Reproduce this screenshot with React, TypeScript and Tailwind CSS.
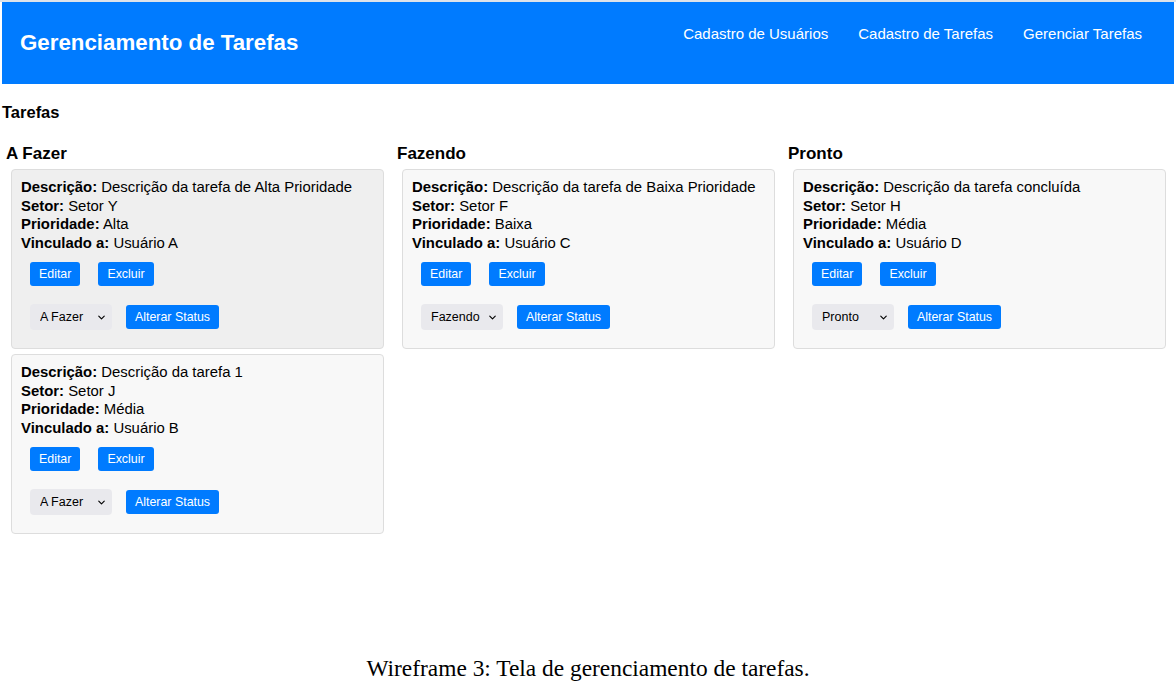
import { ChevronDown } from 'lucide-react'

interface Tarefa {
  id: number
  descricao: string
  setor: string
  prioridade: string
  usuario: string
  status: string
}

const colunas: { titulo: string; tarefas: Tarefa[] }[] = [
  {
    titulo: 'A Fazer',
    tarefas: [
      { id: 1, descricao: 'Descrição da tarefa de Alta Prioridade', setor: 'Setor Y', prioridade: 'Alta', usuario: 'Usuário A', status: 'A Fazer' },
      { id: 2, descricao: 'Descrição da tarefa 1', setor: 'Setor J', prioridade: 'Média', usuario: 'Usuário B', status: 'A Fazer' },
    ],
  },
  {
    titulo: 'Fazendo',
    tarefas: [
      { id: 3, descricao: 'Descrição da tarefa de Baixa Prioridade', setor: 'Setor F', prioridade: 'Baixa', usuario: 'Usuário C', status: 'Fazendo' },
    ],
  },
  {
    titulo: 'Pronto',
    tarefas: [
      { id: 4, descricao: 'Descrição da tarefa concluída', setor: 'Setor H', prioridade: 'Média', usuario: 'Usuário D', status: 'Pronto' },
    ],
  },
]

function Botao({ children }: { children: React.ReactNode }) {
  return (
    <button className="h-[24px] px-[9px] rounded-[3px] bg-[#007bff] text-white text-[12.4px] leading-none">
      {children}
    </button>
  )
}

function CardTarefa({ tarefa, destaque }: { tarefa: Tarefa; destaque?: boolean }) {
  return (
    <div
      className={`ml-[5px] w-[373px] border border-[#dddddd] rounded-[4px] pt-[8px] pb-[18px] pl-[9px] pr-[9px] ${
        destaque ? 'bg-[#efefef]' : 'bg-[#f8f8f8]'
      }`}
    >
      <div className="text-[14.9px] leading-[18.5px] text-black">
        <p><b>Descrição:</b> {tarefa.descricao}</p>
        <p><b>Setor:</b> {tarefa.setor}</p>
        <p><b>Prioridade:</b> {tarefa.prioridade}</p>
        <p><b>Vinculado a:</b> {tarefa.usuario}</p>
      </div>

      {/* Ações */}
      <div className="flex gap-[18px] ml-[9px] mt-[10px]">
        <Botao>Editar</Botao>
        <Botao>Excluir</Botao>
      </div>

      {/* Status */}
      <div className="flex items-center gap-[14px] ml-[9px] mt-[18px]">
        <div className="relative w-[82px] h-[26px]">
          <select
            defaultValue={tarefa.status}
            className="appearance-none w-full h-full rounded-[4px] bg-[#e9e9ed] pl-[10px] text-[12.5px] text-black outline-none"
          >
            <option>A Fazer</option>
            <option>Fazendo</option>
            <option>Pronto</option>
          </select>
          <ChevronDown className="absolute right-[5px] top-[8px] w-[11px] h-[11px] pointer-events-none" strokeWidth={2.5} />
        </div>
        <Botao>Alterar Status</Botao>
      </div>
    </div>
  )
}

export default function App() {
  return (
    <div className="h-[686px] flex flex-col bg-white overflow-hidden" style={{ fontFamily: '"Liberation Sans", Arial, sans-serif' }}>
      <div className="h-[2px] bg-[#dde3ea]" />

      {/* Header */}
      <header className="mx-[2px] h-[82px] bg-[#007bff] text-white flex justify-between pl-[18px] pr-[32px]">
        <h1 className="self-center text-[22.3px] font-bold leading-none">Gerenciamento de Tarefas</h1>
        <nav className="flex gap-[30px] pt-[23px] text-[15px] leading-[18px]">
          <a>Cadastro de Usuários</a>
          <a>Cadastro de Tarefas</a>
          <a>Gerenciar Tarefas</a>
        </nav>
      </header>

      <main className="pl-[2px]">
        <h2 className="mt-[18px] text-[16.5px] font-bold leading-[20px] text-black">Tarefas</h2>

        <div className="flex gap-[14px] pl-[4px] mt-[22px]">
          {colunas.map((col) => (
            <section key={col.titulo} className="w-[377px]">
              <h3 className="text-[17px] font-bold leading-[20px] text-black">{col.titulo}</h3>
              <div className="flex flex-col gap-[5px] mt-[5px]">
                {col.tarefas.map((t) => (
                  <CardTarefa key={t.id} tarefa={t} destaque={t.id === 1} />
                ))}
              </div>
            </section>
          ))}
        </div>
      </main>

      {/* Legenda */}
      <p
        className="mt-auto mb-[5px] text-center text-[23.4px] leading-[26px] text-black"
        style={{ fontFamily: '"Liberation Serif", "Times New Roman", serif' }}
      >
        Wireframe 3: Tela de gerenciamento de tarefas.
      </p>
    </div>
  )
}
